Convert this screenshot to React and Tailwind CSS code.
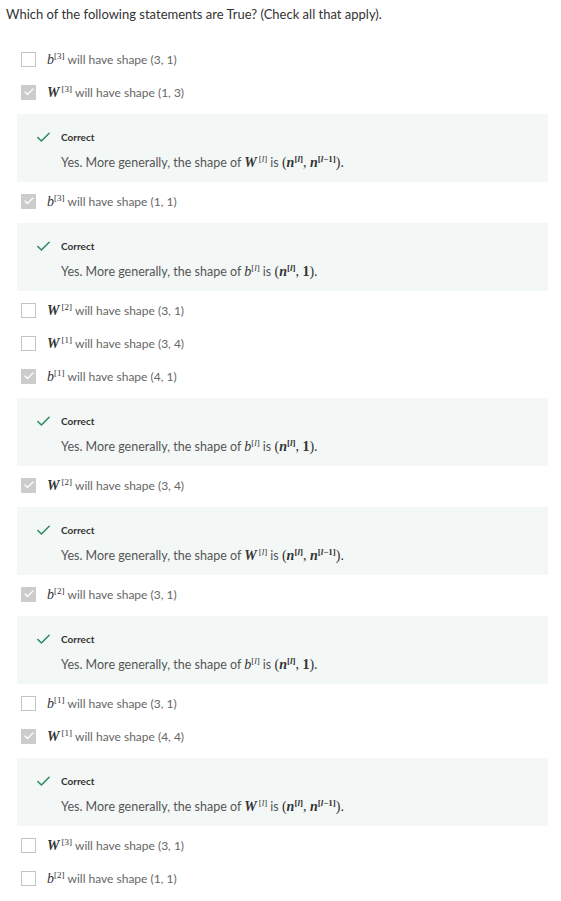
import { Check } from 'lucide-react';

const items = [
  { v: 'b', l: '3', shape: '(3, 1)', checked: false },
  { v: 'W', l: '3', shape: '(1, 3)', checked: true, fb: 'W' },
  { v: 'b', l: '3', shape: '(1, 1)', checked: true, fb: 'b' },
  { v: 'W', l: '2', shape: '(3, 1)', checked: false },
  { v: 'W', l: '1', shape: '(3, 4)', checked: false },
  { v: 'b', l: '1', shape: '(4, 1)', checked: true, fb: 'b' },
  { v: 'W', l: '2', shape: '(3, 4)', checked: true, fb: 'W' },
  { v: 'b', l: '2', shape: '(3, 1)', checked: true, fb: 'b' },
  { v: 'b', l: '1', shape: '(3, 1)', checked: false },
  { v: 'W', l: '1', shape: '(4, 4)', checked: true, fb: 'W' },
  { v: 'W', l: '3', shape: '(3, 1)', checked: false },
  { v: 'b', l: '2', shape: '(1, 1)', checked: false },
];

const serif = { fontFamily: '"Liberation Serif", "DejaVu Serif", serif' };

// math symbol with a bracketed superscript, MathJax style
function MathVar({ v, sup }) {
  const isW = v === 'W';
  return (
    <span className="whitespace-nowrap text-[#333] mr-[3px]" style={serif}>
      <span className={`italic text-[14px] ${isW ? 'font-bold' : ''}`}>{v}</span>
      <sup className={`text-[9px] ${isW ? 'ml-[2px]' : ''}`}>{sup}</sup>
    </span>
  );
}

const L = <i>l</i>;

function Feedback({ kind }) {
  return (
    <div className="ml-[17px] mr-[13px] mt-[5px] mb-[3px] h-[68px] bg-[#f3f8f7] pl-[18px] pt-[15px]">
      <div className="flex items-center gap-[9px]">
        <Check size={17} strokeWidth={2.2} className="text-[#2e8b5f]" />
        <span className="text-[10px] font-bold text-[#333]">Correct</span>
      </div>
      <div className="ml-[26px] mt-[6px] text-[12.5px] text-[#555]">
        Yes. More generally, the shape of{' '}
        {kind === 'W' ? (
          <>
            <MathVar v="W" sup={<>[{L}]</>} />is{' '}
            <span style={serif} className="text-[14px] text-[#333]">
              (<b className="italic">n</b>
              <sup className="text-[9px] font-bold">[{L}]</sup>, <b className="italic">n</b>
              <sup className="text-[9px] font-bold">[{L}−1]</sup>).
            </span>
          </>
        ) : (
          <>
            <MathVar v="b" sup={<>[{L}]</>} />is{' '}
            <span style={serif} className="text-[14px] text-[#333]">
              (<b className="italic">n</b>
              <sup className="text-[9px] font-bold">[{L}]</sup>, <b>1</b>).
            </span>
          </>
        )}
      </div>
    </div>
  );
}

function Box({ checked }) {
  return checked ? (
    <div className="w-[15px] h-[15px] bg-[#cccccc] flex items-center justify-center">
      <Check size={12} strokeWidth={2.5} className="text-white" />
    </div>
  ) : (
    <div className="w-[15px] h-[15px] border border-[#c4c4c4] bg-white" />
  );
}

export default function App() {
  return (
    <div
      className="w-[561px] h-[901px] bg-white overflow-hidden"
      style={{ fontFamily: 'Lato, "Open Sans", sans-serif' }}
    >
      <div className="pl-[6px] pt-[5px] text-[13px] text-[#333]">
        Which of the following statements are True? (Check all that apply).
      </div>
      <div className="mt-[18px]">
        {items.map((it, i) => (
          <div key={i}>
            <div className="h-[33px] flex items-center pl-[21px] gap-[11px] text-[12px] text-[#666]">
              <Box checked={it.checked} />
              <span>
                <MathVar v={it.v} sup={`[${it.l}]`} />
                will have shape {it.shape}
              </span>
            </div>
            {it.fb && <Feedback kind={it.fb} />}
          </div>
        ))}
      </div>
    </div>
  );
}
